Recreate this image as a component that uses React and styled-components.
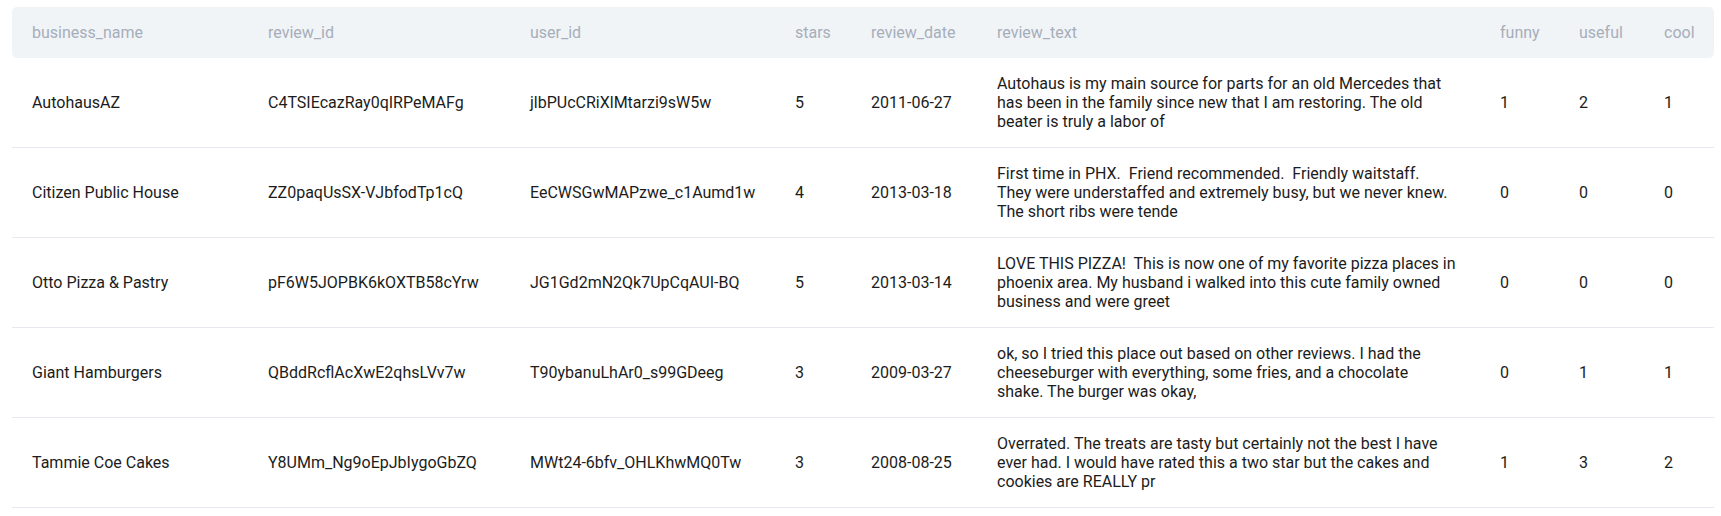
import React from "react";
import styled, { createGlobalStyle } from "styled-components";

const GlobalStyle = createGlobalStyle`
  body {
    margin: 0;
    background: #fff;
    font-family: Roboto, "Liberation Sans", sans-serif;
  }
`;

const columns = [
  { key: "business_name", width: 236 },
  { key: "review_id", width: 262 },
  { key: "user_id", width: 265 },
  { key: "stars", width: 76 },
  { key: "review_date", width: 126 },
  { key: "review_text", width: 503 },
  { key: "funny", width: 79 },
  { key: "useful", width: 85 },
  { key: "cool", width: 70 },
];

const rows = [
  {
    business_name: "AutohausAZ",
    review_id: "C4TSIEcazRay0qIRPeMAFg",
    user_id: "jlbPUcCRiXlMtarzi9sW5w",
    stars: 5,
    review_date: "2011-06-27",
    review_text:
      "Autohaus is my main source for parts for an old Mercedes that has been in the family since new that I am restoring. The old beater is truly a labor of",
    funny: 1,
    useful: 2,
    cool: 1,
  },
  {
    business_name: "Citizen Public House",
    review_id: "ZZ0paqUsSX-VJbfodTp1cQ",
    user_id: "EeCWSGwMAPzwe_c1Aumd1w",
    stars: 4,
    review_date: "2013-03-18",
    review_text:
      "First time in PHX.  Friend recommended.  Friendly waitstaff.  They were understaffed and extremely busy, but we never knew.  The short ribs were tende",
    funny: 0,
    useful: 0,
    cool: 0,
  },
  {
    business_name: "Otto Pizza & Pastry",
    review_id: "pF6W5JOPBK6kOXTB58cYrw",
    user_id: "JG1Gd2mN2Qk7UpCqAUI-BQ",
    stars: 5,
    review_date: "2013-03-14",
    review_text:
      "LOVE THIS PIZZA!  This is now one of my favorite pizza places in phoenix area. My husband i walked into this cute family owned business and were greet",
    funny: 0,
    useful: 0,
    cool: 0,
  },
  {
    business_name: "Giant Hamburgers",
    review_id: "QBddRcflAcXwE2qhsLVv7w",
    user_id: "T90ybanuLhAr0_s99GDeeg",
    stars: 3,
    review_date: "2009-03-27",
    review_text:
      "ok, so I tried this place out based on other reviews. I had the cheeseburger with everything, some fries, and a chocolate shake. The burger was okay,",
    funny: 0,
    useful: 1,
    cool: 1,
  },
  {
    business_name: "Tammie Coe Cakes",
    review_id: "Y8UMm_Ng9oEpJbIygoGbZQ",
    user_id: "MWt24-6bfv_OHLKhwMQ0Tw",
    stars: 3,
    review_date: "2008-08-25",
    review_text:
      "Overrated. The treats are tasty but certainly not the best I have ever had. I would have rated this a two star but the cakes and cookies are REALLY pr",
    funny: 1,
    useful: 3,
    cool: 2,
  },
];

const Page = styled.div`
  padding: 7px 7px 0 12px;
`;

const Table = styled.div`
  display: grid;
  grid-template-columns: ${columns.map((c) => c.width + "px").join(" ")};
  font-size: 16px;
`;

const HeaderRow = styled.div`
  display: contents;
`;

const HeaderCell = styled.div`
  height: 51px;
  display: flex;
  align-items: center;
  padding: 0 20px;
  background: #f1f4f7;
  color: #a6aeba;
  white-space: nowrap;
  ${(p) => p.$first && "border-radius: 5px 0 0 5px;"}
  ${(p) => p.$last && "border-radius: 0 5px 5px 0;"}
`;

const BodyRow = styled.div`
  display: contents;
`;

const Cell = styled.div`
  height: 89px;
  display: flex;
  align-items: center;
  padding: 0 ${(p) => (p.$wrap ? "24px" : "20px")} 0 20px;
  border-bottom: 1px solid #e6e9ef;
  color: #1c1c1c;
  line-height: 19px;
  white-space: ${(p) => (p.$wrap ? "pre-wrap" : "nowrap")};
`;

export default function App() {
  return (
    <>
      <GlobalStyle />
      <Page>
        <Table>
          <HeaderRow>
            {columns.map((c, i) => (
              <HeaderCell
                key={c.key}
                $first={i === 0}
                $last={i === columns.length - 1}
              >
                {c.key}
              </HeaderCell>
            ))}
          </HeaderRow>
          {rows.map((r) => (
            <BodyRow key={r.review_id}>
              {columns.map((c) => (
                <Cell key={c.key} $wrap={c.key === "review_text"}>
                  {r[c.key]}
                </Cell>
              ))}
            </BodyRow>
          ))}
        </Table>
      </Page>
    </>
  );
}
